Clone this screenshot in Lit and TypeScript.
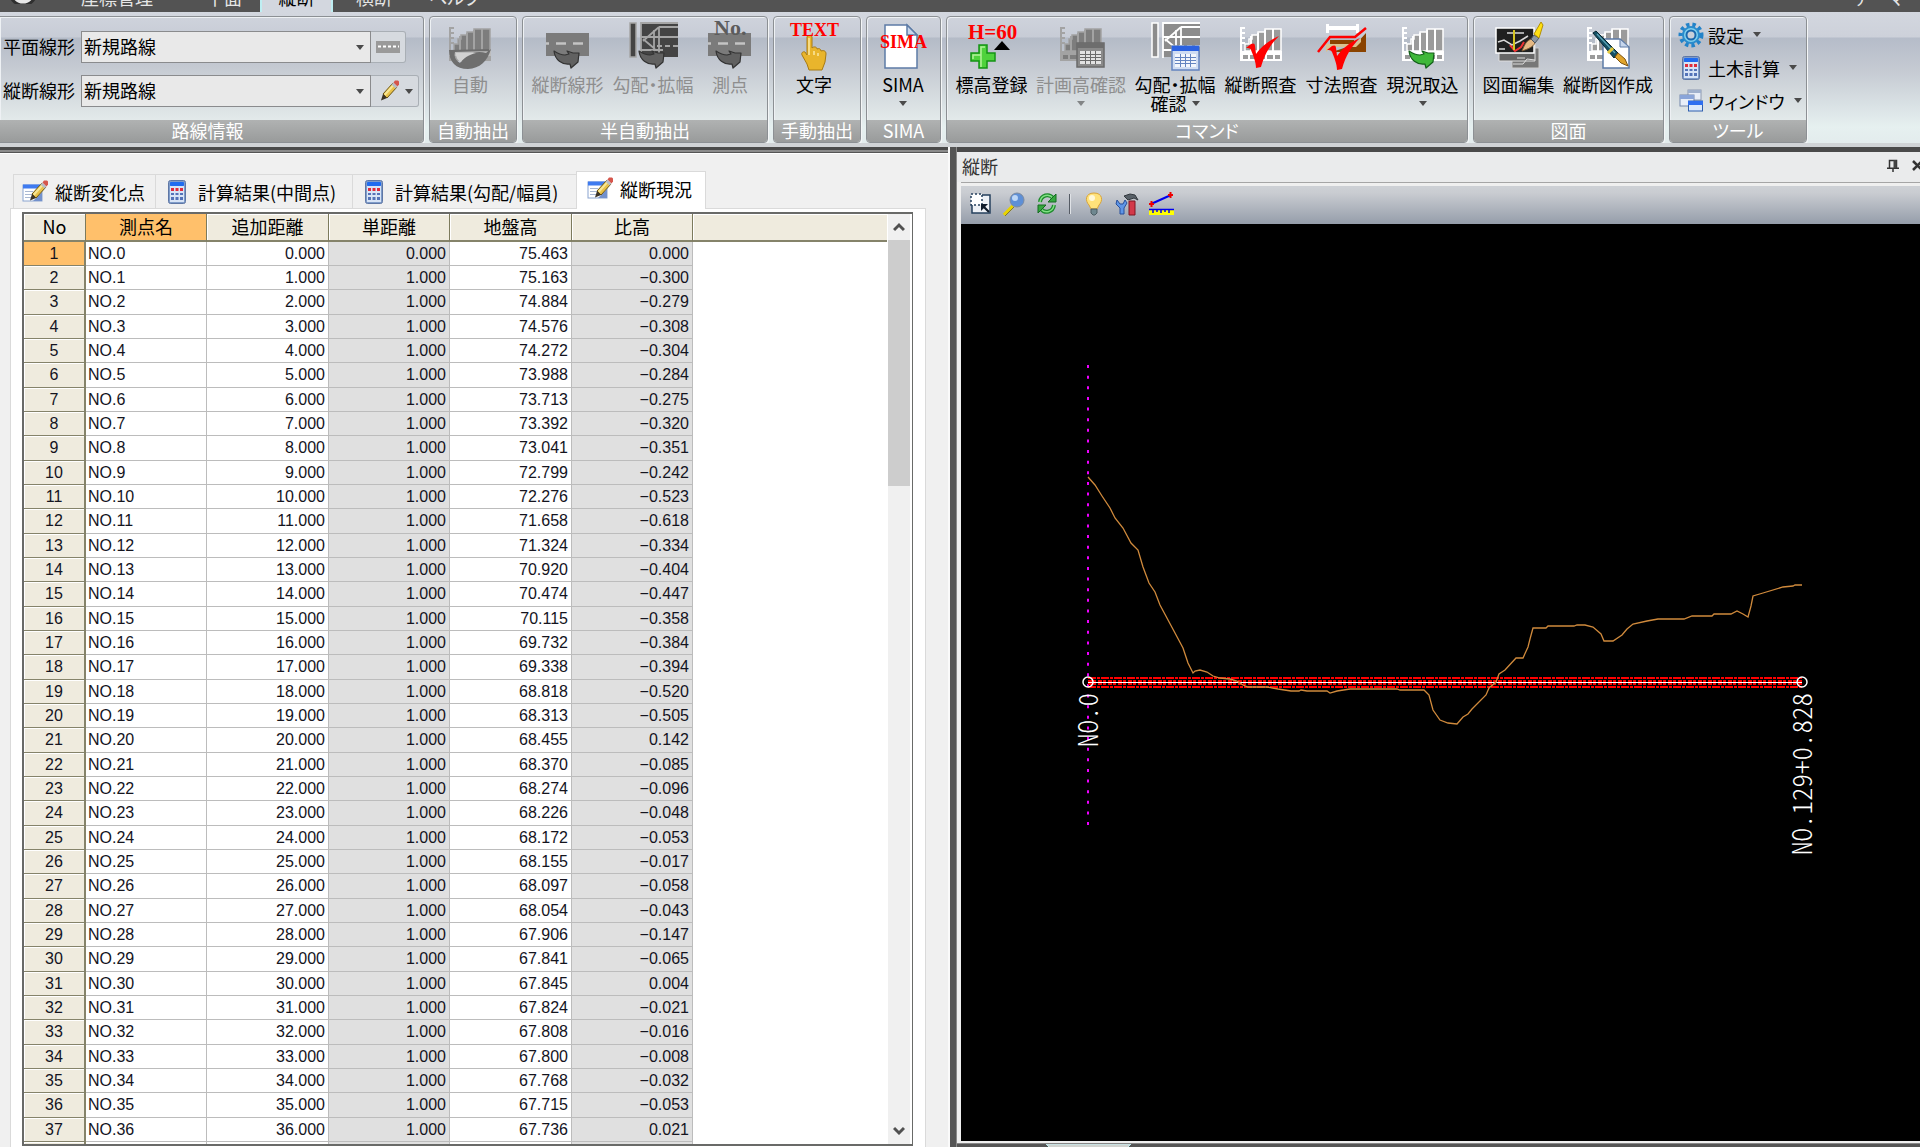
import { LitElement, html, svg, css, nothing, TemplateResult } from "lit";
import { customElement } from "lit/decorators.js";
import { classMap } from "lit/directives/class-map.js";

const GROUND = [
  75.463, 75.163, 74.884, 74.576, 74.272, 73.988, 73.713, 73.392, 73.041, 72.799, 72.276, 71.658, 71.324,
  70.92, 70.474, 70.115, 69.732, 69.338, 68.818, 68.313, 68.455, 68.37, 68.274, 68.226, 68.172, 68.155,
  68.097, 68.054, 67.906, 67.841, 67.845, 67.824, 67.808, 67.8, 67.768, 67.715, 67.736,
];
const RELATIVE = [
  0, -0.3, -0.279, -0.308, -0.304, -0.284, -0.275, -0.32, -0.351, -0.242, -0.523, -0.618, -0.334, -0.404,
  -0.447, -0.358, -0.384, -0.394, -0.52, -0.505, 0.142, -0.085, -0.096, -0.048, -0.053, -0.017, -0.058,
  -0.043, -0.147, -0.065, 0.004, -0.021, -0.016, -0.008, -0.032, -0.053, 0.021,
];
const fixed = (n: number) => n.toFixed(3).replace("-", "−");

/* ---------- icons ---------- */
const icon = (size: number, body: unknown) =>
  html`<svg class="ico" width=${size} height=${size} viewBox="0 0 ${size} ${size}" aria-hidden="true">${body}</svg>`;

const profile = (fill: string, line: string, strip = true) => svg`
  <path fill=${line} d="M3 5h2v34H3zM5 5h3v2H5zM5 10h3v2H5zM5 15h3v2H5zM5 20h3v2H5z"/>
  <path fill=${fill} stroke=${line} stroke-width="1.5" d="M8 29v-7h4v-5h3v-4h6v-3h7V7h16v22z"/>
  <path stroke=${line} stroke-width="2" d="M14 14v15M21 11v18M28 8v21M36 7v22"/>
  <path fill=${line} d="M3 29h42v10H3z"/>
  ${strip ? svg`<path fill=${fill} d="M6 33h5v4H6zM13 33h8v4h-8zM23 33h5v4h-5zM30 33h6v4h-6zM38 33h5v4h-5z"/>` : nothing}`;

const swoosh = (fill: string, edge: string) => svg`
  <path fill=${fill} stroke=${edge} stroke-width="1.2" stroke-linejoin="round"
    d="M10 29C13 31 17 33 21 33L25 32 23 29 29 31 35 31 34 40 27 46 26 42C18 43 11 38 10 29Z"/>`;

const road = svg`
  <rect x="2" y="11" width="43" height="23" fill="#7b7b7b"/>
  <path stroke="#c4c4c4" stroke-width="2.5" stroke-dasharray="10 7" stroke-dashoffset="7" d="M2 21.500h43"/>`;

const plan = (dark: string, line: string) => svg`
  <rect x="1" y="1" width="6" height="34" fill=${dark} stroke=${line} stroke-width="1.500"/>
  <rect x="12" y="1" width="37" height="34" fill=${dark}/>
  <path fill="none" stroke=${line} stroke-width="1.800" d="M12 0v36M12 1h37M12 28h22M12 15h37M30 5h19M30 5L14 19M25 8v22M30 5v26M14 17l12 10"/>
  <path stroke=${line} stroke-width="2" stroke-dasharray="5 3" d="M28 24h21"/>`;

const sheet = (x: number, y: number, head: string, body: string, edge: string) => svg`
  <g transform="translate(${x} ${y})">
    <rect x="1" y="1" width="27" height="24" fill=${body} stroke=${edge} stroke-width="1.500"/>
    <rect x="1" y="1" width="27" height="5" fill=${head}/>
    <path fill="#fff" fill-opacity=".75" d="M4 9h21v13H4z"/>
    <path stroke=${edge} stroke-width="1" d="M4 12.500h21M4 15.500h21M4 18.500h21M9.500 9v13M14.500 9v13M19.500 9v13"/>
  </g>`;

const calc = svg`
  <rect x="3.500" y=".5" width="17" height="23" rx="2" fill="#7f9cc9" stroke="#5f77a5"/>
  <rect x="5" y="6" width="14" height="16" fill="#d8e4f6"/>
  <rect x="5" y="2" width="14" height="4" rx="1" fill="#1f6bf0"/>
  <path fill="#e02c3c" d="M6 8h3v3H6zM10.500 8h3v3h-3zM15 8h3v3h-3z"/>
  <path fill="#5473b8" d="M6 13h3v2H6zM10.500 13h3v2h-3zM15 13h3v2h-3zM6 17h3v3H6zM10.500 17h3v3h-3zM15 17h3v3h-3z"/>`;

const pencil = svg`
  <path fill="#e9c24a" stroke="#6b5310" d="M7 15L17 4l4 4L11 19z"/>
  <path fill="#f7e796" d="M8 15l9-10 1.500 1.500-9 10z"/>
  <path fill="#b9bdc4" d="M15.500 5.500l2-2 4 4-2 2z"/>
  <path fill="#d6564c" d="M17.500 3.500l1.500-2h3l1 1v3l-1.500 2z"/>
  <path fill="#3b3326" d="M7 15l4 4-6 2.500z"/>`;

const editSheet = svg`
  <rect x="1" y="5" width="19" height="16" fill="#fff" stroke="#8aa4cf"/>
  <rect x="1" y="4.500" width="19" height="4" fill="#3f7bf0"/>
  <path stroke="#a9b8d2" d="M3 11.500h8M3 14.500h7M3 17.500h6"/><path fill="#7391cc" d="M12 20l8-8v9h-9z"/>
  <g transform="translate(3 -1)">${pencil}</g>`;

const gear = svg`
  <g transform="translate(12 12)">
    <path fill="none" stroke="#2383c9" stroke-width="5" stroke-dasharray="3.200 2.820" d="M10 0A10 10 0 1 1-10 0 10 10 0 1 1 10 0"/>
    <circle r="8" fill="#7fd0ef" stroke="#2b8ccc" stroke-width="2"/>
    <circle r="4.500" fill="#c9cfd9" stroke="#1b68ad" stroke-width="2"/>
  </g>`;

const windows = svg`
  <rect x="9" y="1" width="13" height="10" fill="#e8eef8" stroke="#8b98b0"/><path fill="#9fb0cc" d="M9 1h13v3H9z"/>
  <rect x="1" y="6" width="14" height="11" fill="#e8eef8" stroke="#7487ab"/><path fill="#8aa5d9" d="M1 6h14v4H1z"/>
  <rect x="9.500" y="12" width="14" height="10" fill="#dce9fb" stroke="#2f5fae"/><path fill="#2f6ff0" d="M9 12h15v4H9z"/>`;

const page = svg`
  <path fill="#fff" stroke="#5d7ba6" stroke-width="1.500" d="M6 3h22l10 10v33H6z"/>
  <path fill="#c6d6ec" stroke="#5d7ba6" stroke-width="1.500" d="M28 3v10h10z"/>`;

const check = svg`<path fill="#f00" d="M9 26l5-4c2-1 4-1 4 2l1 8C24 25 32 18 42 14 33 23 28 31 24 45l-5 1c0-6-3-13-5-18-1-2-3-2-5-2z"/>`;

const hand = svg`
  <path fill="#e9b52c" stroke="#a87a12" stroke-width="1" stroke-linejoin="round"
    d="M17 15c0-2 5-2 5 0v11c2-2 5-1 5 1 2-1 4 0 4 2 3-1 5 0 5 3l-1 8-3 8H19l-2-6-5-9c-1-2 1-4 3-3l2 3z"/>
  <path fill="none" stroke="#fbe9a0" stroke-width="1.500" d="M19 16v17M24 29v4M28 31v3"/>`;

const ICONS: Record<string, TemplateResult> = {
  auto: icon(48, svg`${profile("#7d7d7d", "#a3a3a3", false)}
    <path fill="#bdbdbd" d="M3 29h42v5H3z"/><path fill="#6e6e6e" d="M3 28c0 12 7 19 19 19 12-1 19-7 23-20l-5 4C30 28 20 32 14 41 9 38 8 34 9 30l34-1v-2z"/>
    <path fill="#d2d2d2" d="M10 31h20c-8 2-12 5-15 9-4-2-5-5-5-9z"/>`),
  road: icon(48, svg`${road}${swoosh("#616161", "#333")}`),
  widen: icon(48, svg`${plan("#444", "#a5a5a5")}${swoosh("#616161", "#333")}`),
  station: icon(48, svg`${road}${swoosh("#616161", "#333")}<text x="8" y="13" class="serif" font-size="22" fill="#5c5c5c">No.</text>`),
  text: icon(48, svg`${hand}<text x="0" y="14" class="serif" font-size="18" fill="#f00">TEXT</text>`),
  sima: icon(48, svg`${page}<text x="1" y="26" class="serif" font-size="18" fill="#f00">SIMA</text>`),
  height: icon(48, svg`<text x="0" y="17" class="serif" font-size="21" fill="#f00">H=60</text>
    <path d="M26 28l8-9 8 9z"/>
    <path fill="#4fd23c" stroke="#149414" stroke-width="1.500" d="M11 23h8v8h8v8h-8v7h-8v-7H3v-8h8z"/>
    <path fill="none" stroke="#b4f29a" stroke-width="1.500" d="M13 45V25h4M5 37v-4h8"/>`),
  planned: icon(48, svg`${profile("#7d7d7d", "#a3a3a3")}${sheet(19, 20, "#6d6d6d", "#8a8a8a", "#6a6a6a")}`),
  slope: icon(48, svg`${plan("#8c8c8c", "#fff")}${sheet(20, 23, "#2c62e0", "#cfdcf2", "#6484c0")}`),
  verify: icon(48, svg`${profile("#9b9b9b", "#fff")}${check}`),
  dims: icon(48, svg`<path fill="#fff" d="M8 2h3v9H8zM38 2h3v9h-3zM10 4h28v4H10z"/>
    <path fill="#8a4300" d="M14 30l24-8 10-11v19z"/><path fill="#8a4300" d="M12 18h24v4H12z"/><path fill="#d9c28f" d="M8 22h29l6-6v4l-5 5H14l-6 5z"/>
    <path fill="none" stroke="#f00" stroke-width="2.500" d="M0 30l12-15h25l11-9"/>
    <g transform="translate(0 2)">${check}</g>`),
  current: icon(48, svg`${profile("#9b9b9b", "#fff")}${swoosh("#3fb83a", "#14601a")}`),
  drawing: icon(48, svg`<path fill="#777" stroke="#ccc" d="M17 26h27v20H17z"/><path fill="#666" stroke="#ddd" d="M4 20h36v19H4z"/>
    <path fill="#1f2020" stroke="#fff" stroke-width="1.500" d="M1 6h38v25H1z"/>
    <path fill="none" stroke="#e33" stroke-width="2" d="M15 23l5 6 6-4 3-5"/>
    <path fill="none" stroke="#d8d8d8" stroke-width="1.500" d="M3 20l6-2 8 5 8-4 8-5M12 11h17M4 27h6"/><path stroke="#d4c422" stroke-width="2" d="M19 8v20"/>
    <path fill="#e5b984" stroke="#7a5a33" d="M27 29c3-8 5-10 9-12l4 4c-2 4-7 6-13 8z"/><path fill="#8c97a3" stroke="#4c5560" d="M36 17l3-4 5 3-4 5z"/>
    <path fill="#ffdf10" stroke="#b39005" d="M39 12l7-12 2 3-4 13z"/>
    <path fill="none" stroke="#ddd" d="M18 42h10l4-5 8 1M22 36h8"/>`),
  create: icon(48, svg`${profile("#9b9b9b", "#fff")}
    <path fill="#fff" stroke="#5d7ba6" stroke-width="1.500" d="M19 17h17l9 8v21H19z"/><path fill="#c6d6ec" stroke="#5d7ba6" d="M36 17v8h9z"/>
    <path fill="#155064" stroke="#062631" d="M9 11l3-2 22 22-4 5z"/><path stroke="#5fa5b8" stroke-width="1.200" d="M13 12l18 19"/>
    <path stroke="#e3c93a" stroke-width="3" d="M24 31l5-5"/><path fill="#e0a42c" stroke="#7e5511" d="M31 35l3-4 7 6 3 7-7-3z"/>`),
  gear: icon(24, gear),
  calc: icon(24, calc),
  windows: icon(24, windows),
  pencil: icon(24, pencil),
  dash: icon(24, svg`<rect y="6" width="24" height="12" fill="#9a9a9a"/><path stroke="#fff" stroke-width="2" stroke-dasharray="3 2" d="M2 11.500h21"/>`),
  edit: icon(24, editSheet),
  region: icon(24, svg`<path fill="#eef1f6" stroke="#26405e" stroke-width="1.500" d="M3 3h18v18H3z"/>
    <path fill="#fff" stroke="#26405e" stroke-width="1.500" stroke-dasharray="2 2" d="M2 2h11v11H2z"/>
    <path stroke="#101c2c" stroke-width="2.200" d="M20 20l-6-6"/><path fill="#101c2c" d="M12 12h7l-7 7z"/>`),
  lens: icon(24, svg`<path stroke="#e8d400" stroke-width="3.500" d="M2 23l9-9"/><path stroke="#7d7434" stroke-width="1" d="M3 24l9-9"/>
    <circle cx="15" cy="8" r="7" fill="#5e8fd6" stroke="#7b8aa0"/><circle cx="13" cy="6" r="3" fill="#bdd7f7"/>`),
  refresh: icon(24, svg`<path fill="none" stroke="#1d8a2c" stroke-width="4" d="M5 10c1-7 9-9 13-4M19 13c-1 7-9 9-13 4"/>
    <path fill="none" stroke="#7fe083" stroke-width="1.500" d="M5 10c1-7 9-9 13-4M19 13c-1 7-9 9-13 4"/>
    <path fill="#35a83e" stroke="#146b20" d="M21 2v8h-8zM3 21v-8h8z"/>`),
  bulb: icon(24, svg`<path fill="#ffe27a" stroke="#d9a43a" d="M12 1c9 0 9 8 5 12l-2 4H9l-2-4C3 9 3 1 12 1z"/>
    <ellipse cx="10" cy="6" rx="3" ry="3" fill="#fff8d8"/><path fill="#6f8790" stroke="#4c5d63" d="M9 17h6v4l-2 2h-2l-2-2z"/>`),
  tools: icon(24, svg`<path fill="#5e95e6" stroke="#274f9c" d="M2 8l3 4h3l2-4 2 3-3 5v6H5v-6L1 12z"/>
    <path fill="#586068" stroke="#32383e" d="M9 4l6-2 5 1 3 5-4-2-6 2z"/><path fill="#d3394a" stroke="#7f1622" d="M14 9h6v14h-6z"/>`),
  measure: icon(26, svg`<path stroke="#00e" stroke-width="2" d="M3 13L23 4"/>
    <path stroke="#e00" stroke-width="2" d="M1 13h5M3.500 10v6M20 4h5M22.500 1v6"/>
    <path fill="#ff0" d="M1 18h25v6H1z"/><path stroke="#00e" stroke-width="1.500" d="M1 18.500h25M5 19v3M9 19v2M13 19v3M17 19v2M21 19v3"/>`),
};

const caret = html`<svg class="caret" width="8" height="5" viewBox="0 0 8 5" aria-hidden="true"><path fill="#4a4a4a" d="M0 0h8L4 5z"/></svg>`;
const chevron = (d: string) =>
  html`<svg width="12" height="12" viewBox="0 0 12 12" aria-hidden="true"><path fill="none" stroke="#505050" stroke-width="3" d=${d}/></svg>`;

interface Cmd { icon: string; label: string; second?: string; menu?: boolean; off?: boolean; size?: "xs" | "s" | "m" | "l"; }
interface Group { title: string; cls: string; items: Cmd[]; }
const GROUPS: Group[] = [
  { title: "自動抽出", cls: "g-auto", items: [{ icon: "auto", label: "自動", off: true, size: "s" }] },
  { title: "半自動抽出", cls: "g-semi", items: [
    { icon: "road", label: "縦断線形", off: true },
    { icon: "widen", label: "勾配・拡幅", off: true, size: "m" },
    { icon: "station", label: "測点", off: true, size: "xs" } ] },
  { title: "手動抽出", cls: "g-auto", items: [{ icon: "text", label: "文字", size: "s" }] },
  { title: "SIMA", cls: "g-sima", items: [{ icon: "sima", label: "SIMA", menu: true, size: "xs" }] },
  { title: "コマンド", cls: "g-cmd", items: [
    { icon: "height", label: "標高登録" },
    { icon: "planned", label: "計画高確認", off: true, menu: true, size: "l" },
    { icon: "slope", label: "勾配・拡幅", second: "確認", menu: true, size: "m" },
    { icon: "verify", label: "縦断照査" },
    { icon: "dims", label: "寸法照査" },
    { icon: "current", label: "現況取込", menu: true } ] },
  { title: "図面", cls: "g-draw", items: [
    { icon: "drawing", label: "図面編集" },
    { icon: "create", label: "縦断図作成", size: "l" } ] },
];

/* ---------- ribbon ---------- */
@customElement("app-ribbon")
export class AppRibbon extends LitElement {
  static styles = css`
    :host { display: block; font: 18px/20px "Noto Sans CJK JP", sans-serif; font-feature-settings: "palt"; color: #000; }
    button, select { font: inherit; font-feature-settings: inherit; color: inherit; margin: 0; padding: 0; border: 0; background: none; }
    .menu { display: flex; align-items: flex-end; height: 12px; overflow: hidden; background: #535353; color: #e6e6e6; white-space: nowrap; }
    .menu a { color: inherit; text-decoration: none; line-height: 24px; padding-bottom: 3px; text-align: center; }
    .orb { flex: none; width: 46px; height: 40px; display: flex; align-items: flex-end; justify-content: center; }
    .orb svg { display: block; margin-bottom: 8px; }
    .m-a { width: 142px; } .m-b { width: 72px; }
    .menu .m-on { box-sizing: border-box; width: 73px; background: #d3d7df; color: #000; border: solid #bfeef2; border-width: 0 2px; }
    .m-c { width: 82px; } .m-d { width: 80px; }
    .menu .m-theme { margin-left: auto; padding-right: 16px; }
    .bar { display: flex; gap: 5px; height: 131px; padding: 4px 0 0; overflow: hidden; box-sizing: border-box;
      background: linear-gradient(#d3d7df 0, #cdd1da 25px, #b5bcc9 26px, #c6cbd3 60px, #e6f0f0 115px, #e3eced 100%); }
    .wrap { background: #d0d3d6; padding-bottom: 4px; }
    .group { flex: none; display: flex; flex-direction: column; box-sizing: border-box; border: 1px solid #8c9094; border-radius: 4px; overflow: hidden;
      box-shadow: inset 1px 1px 0 #eef1f4, 1px 1px 0 #f4f6f7; background: linear-gradient(#cfd3dc 0, #c7ccd6 20px, #b4bbc7 21px, #c5cad2 50px, #e4ebeb 105px); }
    .title { box-sizing: border-box; height: 22px; margin: 0; font-weight: 400; font-size: 18px; line-height: 20px; text-align: center; color: #fff; background: linear-gradient(#b0b2b2, #999b9b); }
    .body { flex: 1; display: flex; padding-left: 4px; }
    .g-route { width: 424px; border-left: 0; border-top-left-radius: 0; border-bottom-left-radius: 0; }
    .g-route .title { padding-right: 8px; }
    .g-auto { width: 88px; } .g-semi { width: 246px; } .g-sima { width: 75px; } .g-cmd { width: 522px; } .g-draw { width: 191px; } .g-tool { width: 138px; }
    .cmd { flex: none; width: 81px; display: flex; flex-direction: column; align-items: center; justify-content: flex-start; padding-top: 5px; line-height: 18px; white-space: nowrap; }
    .cmd.xs { width: 64px; } .cmd.s { width: 72px; } .cmd.m { width: 90px; } .cmd.l { width: 98px; }
    .cmd .label { margin-top: 5px; }
    .cmd .more { display: flex; align-items: center; gap: 5px; height: 20px; }
    .cmd.off { color: #8e8e8e; }
    .ico { display: block; flex: none; overflow: visible; }
    .serif { font-family: "Liberation Serif", serif; font-weight: 700; font-feature-settings: normal; }
    .caret { display: block; flex: none; }
    .off .caret { opacity: .6; }
    .form { display: grid; grid-template-columns: 74px 290px auto; column-gap: 4px; row-gap: 12px; align-content: start; justify-content: start; padding: 14px 0 0 3px; }
    .form label { line-height: 30px; white-space: nowrap; }
    .combo { display: grid; grid-template-columns: 1fr 14px; align-items: center; box-sizing: border-box; height: 32px; border: 1px solid #8a8b8d; background: #e9e9e9; }
    .combo select { grid-area: 1 / 1 / 2 / 3; appearance: none; height: 30px; padding: 0 24px 2px 2px; width: 100%; }
    .combo .caret { grid-area: 1 / 2; pointer-events: none; }
    .side { display: flex; align-items: center; gap: 5px; box-sizing: border-box; height: 32px; margin-left: -4px; justify-self: start; }
    .form .side { padding: 0 5px; border: 1px solid #a9afb5; border-left: 0; border-radius: 0 3px 3px 0; background: #d6dadf; }
    .g-tool .body { flex-direction: column; justify-content: flex-start; align-items: flex-start; padding: 1px 0 0 9px; }
    .tool { display: flex; align-items: center; height: 33px; gap: 5px; white-space: nowrap; }
    .tool .caret { margin-left: 4px; }
  `;

  private cmd(c: Cmd) {
    return html`<button class=${classMap({ cmd: true, off: !!c.off, [c.size ?? "base"]: true })} ?disabled=${!!c.off}>
      ${ICONS[c.icon]}<span class="label">${c.label}</span>
      ${c.menu ? html`<span class="more">${c.second ?? nothing}${caret}</span>` : nothing}
    </button>`;
  }

  render() {
    return html`
      <nav class="menu">
        <span class="orb"><svg width="32" height="32" viewBox="0 0 32 32" aria-hidden="true"><circle cx="16" cy="20" r="13" fill="#e8e8e8" stroke="#2f2f2f" stroke-width="3"/></svg></span>
        <a class="m-a" href="#">座標管理</a><a class="m-b" href="#">平面</a><a class="m-on" href="#">縦断</a>
        <a class="m-c" href="#">横断</a><a class="m-d" href="#">ヘルプ</a><a class="m-theme" href="#">テーマ</a>
      </nav>
      <div class="wrap">
      <div class="bar">
        <section class="group g-route">
          <div class="body form">
            <label for="plan">平面線形</label>
            <div class="combo"><select id="plan"><option>新規路線</option></select>${caret}</div>
            <button class="side" aria-label="平面線形">${ICONS.dash}</button>
            <label for="prof">縦断線形</label>
            <div class="combo"><select id="prof"><option>新規路線</option></select>${caret}</div>
            <button class="side" aria-label="縦断線形">${ICONS.pencil}${caret}</button>
          </div>
          <h2 class="title">路線情報</h2>
        </section>
        ${GROUPS.map((g) => html`<section class="group ${g.cls}"><div class="body">${g.items.map((c) => this.cmd(c))}</div><h2 class="title">${g.title}</h2></section>`)}
        <section class="group g-tool">
          <div class="body">
            <button class="tool">${ICONS.gear}<span>設定</span>${caret}</button>
            <button class="tool">${ICONS.calc}<span>土木計算</span>${caret}</button>
            <button class="tool">${ICONS.windows}<span>ウィンドウ</span>${caret}</button>
          </div>
          <h2 class="title">ツール</h2>
        </section>
      </div>
      </div>
    `;
  }
}

/* ---------- survey table ---------- */
@customElement("survey-table")
export class SurveyTable extends LitElement {
  static styles = css`
    :host { display: flex; flex-direction: column; min-height: 0; font: 18px/20px "Noto Sans CJK JP", sans-serif; font-feature-settings: "palt"; color: #000; background: #f0f0f0; }
    .tabs { display: flex; align-items: flex-end; height: 39px; padding: 16px 0 0 13px; }
    .tab { display: flex; align-items: center; gap: 13px; box-sizing: border-box; height: 34px; margin: 0; padding: 0 8px; border: 1px solid #dadada; border-right: 0; border-bottom: 0;
      background: #f0f0f0; font: inherit; font-feature-settings: inherit; color: inherit; white-space: nowrap; }
    .tab.t1 { width: 142px; gap: 9px; } .tab.t2 { width: 197px; gap: 9px; padding-left: 9px; } .tab.t3 { width: 224px; gap: 9px; padding-left: 9px; }
    .tab.on { width: 130px; height: 38px; margin-bottom: -1px; padding: 0 10px 4px; gap: 9px; background: #fff; border-right: 1px solid #dadada; z-index: 1; }
    .ico { display: block; flex: none; overflow: visible; }
    .pane { flex: 1; min-height: 0; display: flex; margin: 0 22px 0 10px; padding: 3px 12px 1px 11px; border: 1px solid #dadada; border-bottom: 0; background: #fff; }
    .grid { flex: 1; display: flex; min-width: 0; border: 2px solid #696a68; border-right-width: 1px; overflow: hidden; }
    .view { flex: 1; min-width: 0; overflow: hidden; }
    table { width: 100%; table-layout: fixed; border-collapse: separate; border-spacing: 0; }
    .c-no { width: 62px; } .c-a { width: 121px; } .c-b { width: 122px; }
    th, td { box-sizing: border-box; padding: 0; font-weight: 400; white-space: nowrap; overflow: hidden; }
    thead th { height: 28px; padding-bottom: 2px; background: #efebde; border-right: 1px solid #7c7a5c; border-bottom: 2px solid #85836a; box-shadow: inset 1px 1px 0 #fff; line-height: 24px; }
    thead th.rest { border-right: 0; }
    thead th.sel, tbody th.sel { background: #ffc06b; box-shadow: none; }
    tbody { font: 16px/22px "Liberation Sans", sans-serif; font-feature-settings: normal; color: #14141e; }
    tbody tr { height: 24px; }
    tbody tr:nth-child(3n) { height: 25px; }
    tbody th { background: #efebde; border-right: 2px solid #85836a; border-bottom: 1px solid #85836a; box-shadow: inset 1px 1px 0 #fff; text-align: center; }
    td { border-right: 1px solid #bcbcbc; border-bottom: 1px solid #bcbcbc; text-align: right; padding-right: 3px; background: #fff; }
    td.name { text-align: left; padding-left: 2px; }
    td.ro { background: #e0e0e0; }
    td.rest { border: 0; }
    .scroll { flex: none; width: 25px; display: flex; flex-direction: column; box-sizing: border-box; padding: 0 2px 0 1px; }
    .scroll button { flex: none; height: 26px; padding: 0; border: 0; background: #f0f0f0; display: grid; place-items: center; }
    .track { flex: 1; background: #f0f0f0; }
    .thumb { height: 28%; background: #cdcdcd; }
  `;

  render() {
    return html`
      <div class="tabs" role="tablist">
        <button class="tab t1" role="tab">${ICONS.edit}縦断変化点</button>
        <button class="tab t2" role="tab">${ICONS.calc}計算結果(中間点)</button>
        <button class="tab t3" role="tab">${ICONS.calc}計算結果(勾配/幅員)</button>
        <button class="tab on" role="tab" aria-selected="true">${ICONS.edit}縦断現況</button>
      </div>
      <div class="pane">
        <div class="grid">
          <div class="view">
            <table>
              <colgroup><col class="c-no"><col class="c-a"><col class="c-b"><col class="c-a"><col class="c-b"><col class="c-a"><col></colgroup>
              <thead><tr><th>No</th><th class="sel">測点名</th><th>追加距離</th><th>単距離</th><th>地盤高</th><th>比高</th><th class="rest"></th></tr></thead>
              <tbody>
                ${GROUND.map((g, i) => html`<tr>
                  <th class=${classMap({ sel: i === 0 })}>${i + 1}</th><td class="name">NO.${i}</td><td>${fixed(i)}</td>
                  <td class="ro">${i ? "1.000" : "0.000"}</td><td>${fixed(g)}</td><td class="ro">${fixed(RELATIVE[i])}</td><td class="rest"></td></tr>`)}
                <tr><th></th><td></td><td></td><td class="ro"></td><td></td><td class="ro"></td><td class="rest"></td></tr>
              </tbody>
            </table>
          </div>
          <div class="scroll">
            <button aria-label="上へ">${chevron("M1 9l5-5 5 5")}</button>
            <div class="track"><div class="thumb"></div></div>
            <button aria-label="下へ">${chevron("M1 3l5 5 5-5")}</button>
          </div>
        </div>
      </div>`;
  }
}

/* ---------- profile view ---------- */
const GROUND_LINE =
  "127,253 134,261 141,272 149,284 154,294 162,304 170,319 177,326 182,343 188,359 194,368 199,381 214,409 222,424 227,439 232,449 " +
  "234,447 239,446 246,448 252,452 259,454 269,455 276,457 282,461 287,463 306,463 317,465 330,467 338,467 340,466 346,467 366,467 369,469 " +
  "376,467 389,465 436,465 439,466 463,466 468,471 472,486 479,496 487,499 496,500 502,493 507,490 511,485 525,471 528,464 535,458 " +
  "538,450 544,446 555,434 562,434 567,423 569,415 572,404 585,404 587,402 613,402 616,401 624,401 632,403 640,410 643,417 652,417 661,411 " +
  "666,405 672,400 686,397 697,395 723,395 731,392 751,392 753,390 770,390 776,387 782,390 787,393 790,382 792,372 802,369 822,363 832,362 834,361 841,361";

@customElement("profile-view")
export class ProfileView extends LitElement {
  static styles = css`
    :host { display: flex; flex-direction: column; min-height: 0; min-width: 0; background: #555; font: 18px/20px "Noto Sans CJK JP", sans-serif; color: #333; }
    .panel { flex: 1; min-height: 0; display: flex; flex-direction: column; border: solid #efefef; border-width: 0 0 2px 4px; }
    .title { display: flex; align-items: center; height: 30px; margin-left: -4px; padding: 0 0 3px 5px; background: #eaebec; box-sizing: border-box; overflow: hidden; }
    .title h2 { flex: 1; margin: 0; font: inherit; }
    .title button { flex: none; border: 0; padding: 0; margin-right: 13px; background: none; }
    .title button:last-child { margin-right: -4px; }
    .title svg, .tools svg { display: block; overflow: visible; }
    .tools { display: flex; align-items: center; gap: 9px; height: 42px; box-sizing: border-box; padding: 0 8px; border-top: 1px solid #a5a5a5; box-shadow: inset 0 3px 0 #efefef; background: linear-gradient(#cdd0d5 4px, #c9ccd1 10px, #959daa); }
    .tools button { border: 0; padding: 0; background: none; }
    .sep { width: 2px; height: 20px; margin: 0 2px 0 1px; background: #555b64; border-right: 1px solid #dfe2e6; box-sizing: border-box; }
    .canvas { flex: 1; min-height: 0; width: 100%; display: block; background: #000; }
    .cad { font: 300 27px "Noto Sans CJK JP", monospace; font-feature-settings: "hwid"; fill: #fff; }
    .foot { flex: none; height: 4px; padding-left: 89px; border-top: 1px solid #888; box-sizing: border-box; }
    .foot svg { display: block; }
  `;

  render() {
    return html`
      <div class="panel">
        <header class="title"><h2>縦断</h2>
          <button aria-label="固定"><svg width="12" height="14" viewBox="0 0 12 14"><path fill="none" stroke="#333" stroke-width="1.500" d="M2.500 9V1.500h7V9M0 9.200h12M6 9v4"/><path fill="#444" d="M6.500 1h3v8h-3z"/></svg></button>
          <button aria-label="閉じる"><svg width="12" height="12" viewBox="0 0 12 12"><path stroke="#333" stroke-width="2.500" d="M1 1l9 9M10 1L1 10"/></svg></button>
        </header>
        <div class="tools">
          <button aria-label="範囲">${ICONS.region}</button><button aria-label="拡大">${ICONS.lens}</button><button aria-label="更新">${ICONS.refresh}</button>
          <span class="sep"></span>
          <button aria-label="表示">${ICONS.bulb}</button><button aria-label="設定">${ICONS.tools}</button><button aria-label="計測">${ICONS.measure}</button>
        </div>
        <svg class="canvas" viewBox="0 0 959 917" role="img" aria-label="縦断">
          <path stroke="#e0f" stroke-width="2" stroke-dasharray="3 7.630" d="M127 141V604"/>
          <g stroke="#f00" stroke-width="2">
            <path stroke-dasharray="8 1 3 1" d="M127 454H841"/>
            <path stroke-dasharray="4 1 3 2" d="M127 457H841"/>
            <path stroke-dasharray="4 1 3 2" d="M127 460H841"/>
            <path stroke-dasharray="8 1 3 1" d="M127 463H841"/>
          </g>
          <path stroke="#fff" stroke-width="1" d="M127 458.500H841"/>
          <polyline fill="none" stroke="#d08a3c" stroke-width="1.300" points=${GROUND_LINE}/>
          <g fill="none" stroke="#fff" stroke-width="1.500"><circle cx="127" cy="458" r="5"/><circle cx="841" cy="458" r="5"/></g>
          <text class="cad" text-anchor="end" transform="translate(137 469) rotate(-90)">NO.0</text>
          <text class="cad" text-anchor="end" transform="translate(851 469) rotate(-90)">NO.129+0.828</text>
        </svg>
      </div>
      <div class="foot"><svg width="85" height="4" viewBox="0 0 85 4" aria-hidden="true"><path fill="#d0d3d0" stroke="#bfeef2" d="M0 0h85l-4 4H4z"/></svg></div>`;
  }
}

@customElement("app-root")
export class AppRoot extends LitElement {
  static styles = css`
    :host { display: flex; flex-direction: column; height: 100vh; overflow: hidden; background: #4a4a4a; }
    .main { flex: 1; min-height: 0; display: grid; grid-template-columns: minmax(0, 948fr) 9px minmax(0, 963fr); grid-template-rows: minmax(0, 1fr); }
    .left { border-top: 1px solid #555; box-shadow: inset 0 1px 0 #fff; margin-top: 5px; outline: 2px solid #8c8c8c; }
    .split { border-left: 2px solid #fafafa; background: #555; border-right: 1px solid #8a8a8a; }
    .right { margin-top: 5px; }
  `;
  render() {
    return html`<app-ribbon></app-ribbon>
      <div class="main">
        <survey-table class="left"></survey-table>
        <div class="split"></div>
        <profile-view class="right"></profile-view>
      </div>`;
  }
}
